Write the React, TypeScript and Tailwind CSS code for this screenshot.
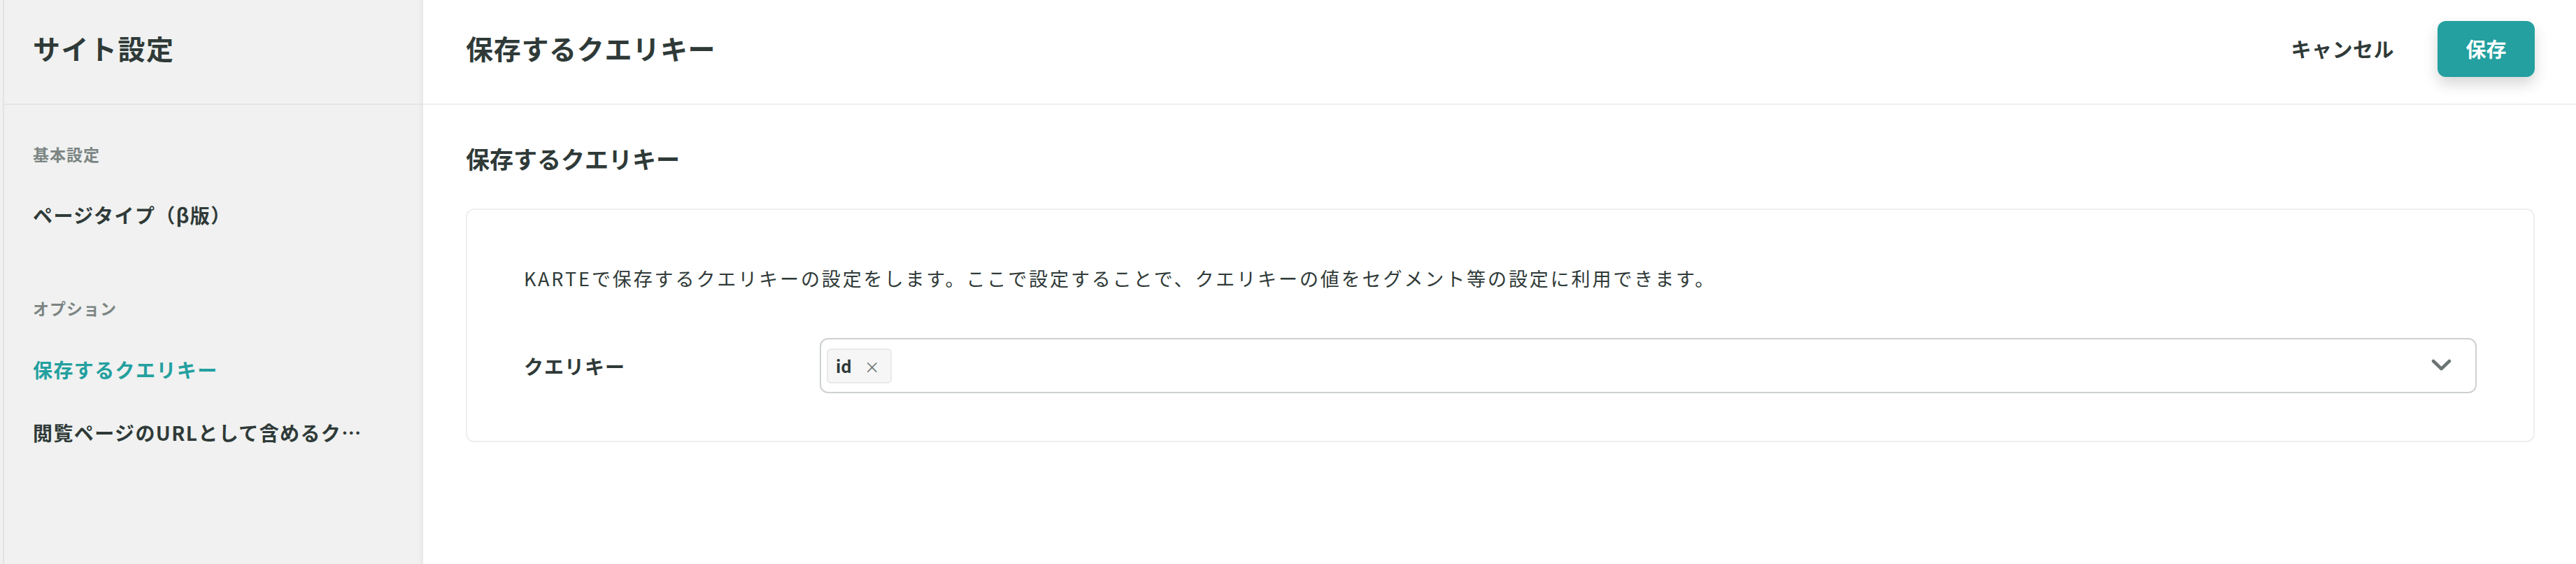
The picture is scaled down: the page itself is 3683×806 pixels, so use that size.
const NAV = [
  {
    group: "基本設定",
    groupClass: "mt-[50px]",
    items: [{ label: "ページタイプ（β版）", className: "mt-[47px]" }],
  },
  {
    group: "オプション",
    groupClass: "mt-[93px]",
    items: [
      { label: "保存するクエリキー", className: "mt-[48px]", active: true },
      { label: "閲覧ページのURLとして含めるクエリキー", className: "mt-[50px]" },
    ],
  },
];

function Sidebar() {
  return (
    <aside className="flex h-full w-[605px] shrink-0 bg-[#f0f1f0] shadow-[inset_-8px_0_10px_-8px_rgba(0,0,0,0.08)]">
      <div className="ml-[4px] flex h-full flex-1 flex-col border-l-2 border-[#e2e4e3]">
        <div className="flex h-[150px] shrink-0 items-center border-b-2 border-[#e4e6e5] pl-[41px]">
          <h1 className="pb-[12px] text-[39px] font-bold leading-none tracking-[1.5px] text-[#2f3a38]">
            サイト設定
          </h1>
        </div>
        <nav className="pl-[41px]">
          {NAV.map((g) => (
            <div key={g.group}>
              <div
                className={`${g.groupClass} text-[23px] font-bold leading-[40px] tracking-[1px] text-[#7b8583]`}
              >
                {g.group}
              </div>
              {g.items.map((it) => (
                <div
                  key={it.label}
                  className={`${it.className} max-w-[470px] truncate text-[28px] font-bold leading-[40px] tracking-[1.4px] ${
                    it.active ? "text-[#23a09f]" : "text-[#2f3a38]"
                  }`}
                >
                  {it.label}
                </div>
              ))}
            </div>
          ))}
        </nav>
      </div>
    </aside>
  );
}

export default function App() {
  return (
    <div className="flex h-[806px] w-[3683px] overflow-hidden bg-white font-['Noto_Sans_CJK_JP',sans-serif] text-[#2f3a38]">
      <Sidebar />
      <main className="flex h-full flex-1 flex-col">
        <header className="flex h-[150px] shrink-0 items-center justify-between border-b-2 border-[#efefef] pl-[61px] pr-[59px]">
          <h2 className="pb-[12px] text-[39px] font-bold leading-none tracking-[0.7px]">
            保存するクエリキー
          </h2>
          <div className="flex items-center gap-[62px] pb-[8px]">
            <button className="text-[29px] font-bold tracking-[0.5px] text-[#2f3a38]">
              キャンセル
            </button>
            <button className="flex h-[80px] w-[139px] items-center justify-center rounded-[12px] bg-[#23a09f] text-[29px] font-bold text-white shadow-[0_10px_20px_rgba(0,0,0,0.16)]">
              保存
            </button>
          </div>
        </header>

        <section className="pl-[61px] pr-[59px]">
          <h3 className="mt-[57px] text-[34px] font-bold leading-[40px]">保存するクエリキー</h3>
          <div className="mt-[51px] rounded-[12px] border-2 border-[#eeeeee] px-[81px] pb-[68px] pt-[78px]">
            <p className="text-[27px] leading-[40px] tracking-[2.9px]">
              KARTEで保存するクエリキーの設定をします。ここで設定することで、クエリキーの値をセグメント等の設定に利用できます。
            </p>
            <div className="mt-[65px] flex items-center">
              <label className="w-[423px] shrink-0 text-[28px] font-bold tracking-[1px]">
                クエリキー
              </label>
              <div className="flex h-[79px] flex-1 items-center justify-between rounded-[12px] border-2 border-[#cdd1d0] pl-[8px] pr-[34px]">
                <span className="flex h-[50px] items-center gap-[18px] rounded-[6px] border-2 border-[#e8eaea] bg-[#f6f6f6] pl-[11px] pr-[15px]">
                  <span className="text-[24px] font-bold leading-none">id</span>
                  <span className="text-[22px] leading-none text-[#6b7473]">×</span>
                </span>
                <svg width="29" height="19" viewBox="0 0 29 19" className="text-[#6b7473]">
                  <polyline
                    points="3,3 14.5,14 26,3"
                    fill="none"
                    stroke="currentColor"
                    strokeWidth="4.5"
                    strokeLinecap="round"
                    strokeLinejoin="round"
                  />
                </svg>
              </div>
            </div>
          </div>
        </section>
      </main>
    </div>
  );
}
